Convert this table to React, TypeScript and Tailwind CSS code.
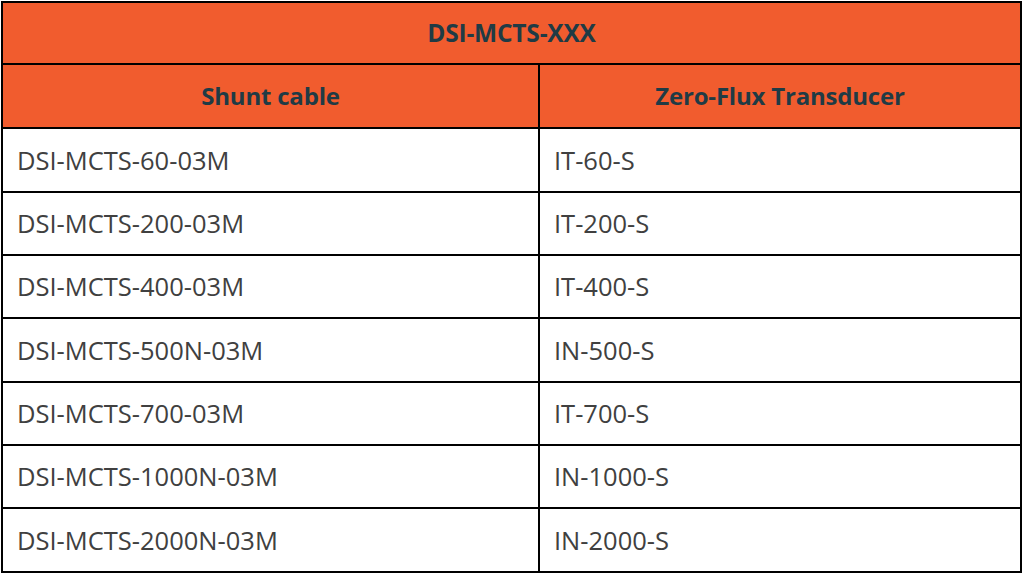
const rows: [string, string][] = [
  ["DSI-MCTS-60-03M", "IT-60-S"],
  ["DSI-MCTS-200-03M", "IT-200-S"],
  ["DSI-MCTS-400-03M", "IT-400-S"],
  ["DSI-MCTS-500N-03M", "IN-500-S"],
  ["DSI-MCTS-700-03M", "IT-700-S"],
  ["DSI-MCTS-1000N-03M", "IN-1000-S"],
  ["DSI-MCTS-2000N-03M", "IN-2000-S"],
];

const rowHeights = ["h-[64px]", "h-[63px]", "h-[63px]", "h-[64px]", "h-[63px]", "h-[63px]", "h-[62px]"];

export default function App() {
  return (
    <div className="w-[1024px] h-[575px] bg-white pt-[1px] pl-[1px] font-['Open_Sans',sans-serif]">
      <div className="w-[1021px] border-2 border-black">
        {/* title */}
        <div className="h-[62px] bg-[#f15c2e] border-b-2 border-black flex items-center justify-center">
          <span className="text-[24.5px] font-bold text-[#1f3b45] tracking-[-0.2px]">DSI-MCTS-XXX</span>
        </div>

        {/* column headers */}
        <div className="h-[64px] bg-[#f15c2e] border-b-2 border-black flex">
          <div className="w-[537px] border-r-2 border-black flex items-center justify-center">
            <span className="text-[24px] font-bold text-[#1f3b45] tracking-[-0.2px]">Shunt cable</span>
          </div>
          <div className="flex-1 flex items-center justify-center">
            <span className="text-[24px] font-bold text-[#1f3b45] tracking-[-0.2px]">Zero-Flux Transducer</span>
          </div>
        </div>

        {/* data */}
        {rows.map(([cable, trans], i) => (
          <div
            key={cable}
            className={`${rowHeights[i]} flex ${i < rows.length - 1 ? "border-b-2 border-black" : ""}`}
          >
            <div className="w-[537px] border-r-2 border-black flex items-center pl-[14px]">
              <span className="text-[25.5px] text-[#404040]">{cable}</span>
            </div>
            <div className="flex-1 flex items-center pl-[14px]">
              <span className="text-[25.5px] text-[#404040]">{trans}</span>
            </div>
          </div>
        ))}
      </div>
    </div>
  );
}
